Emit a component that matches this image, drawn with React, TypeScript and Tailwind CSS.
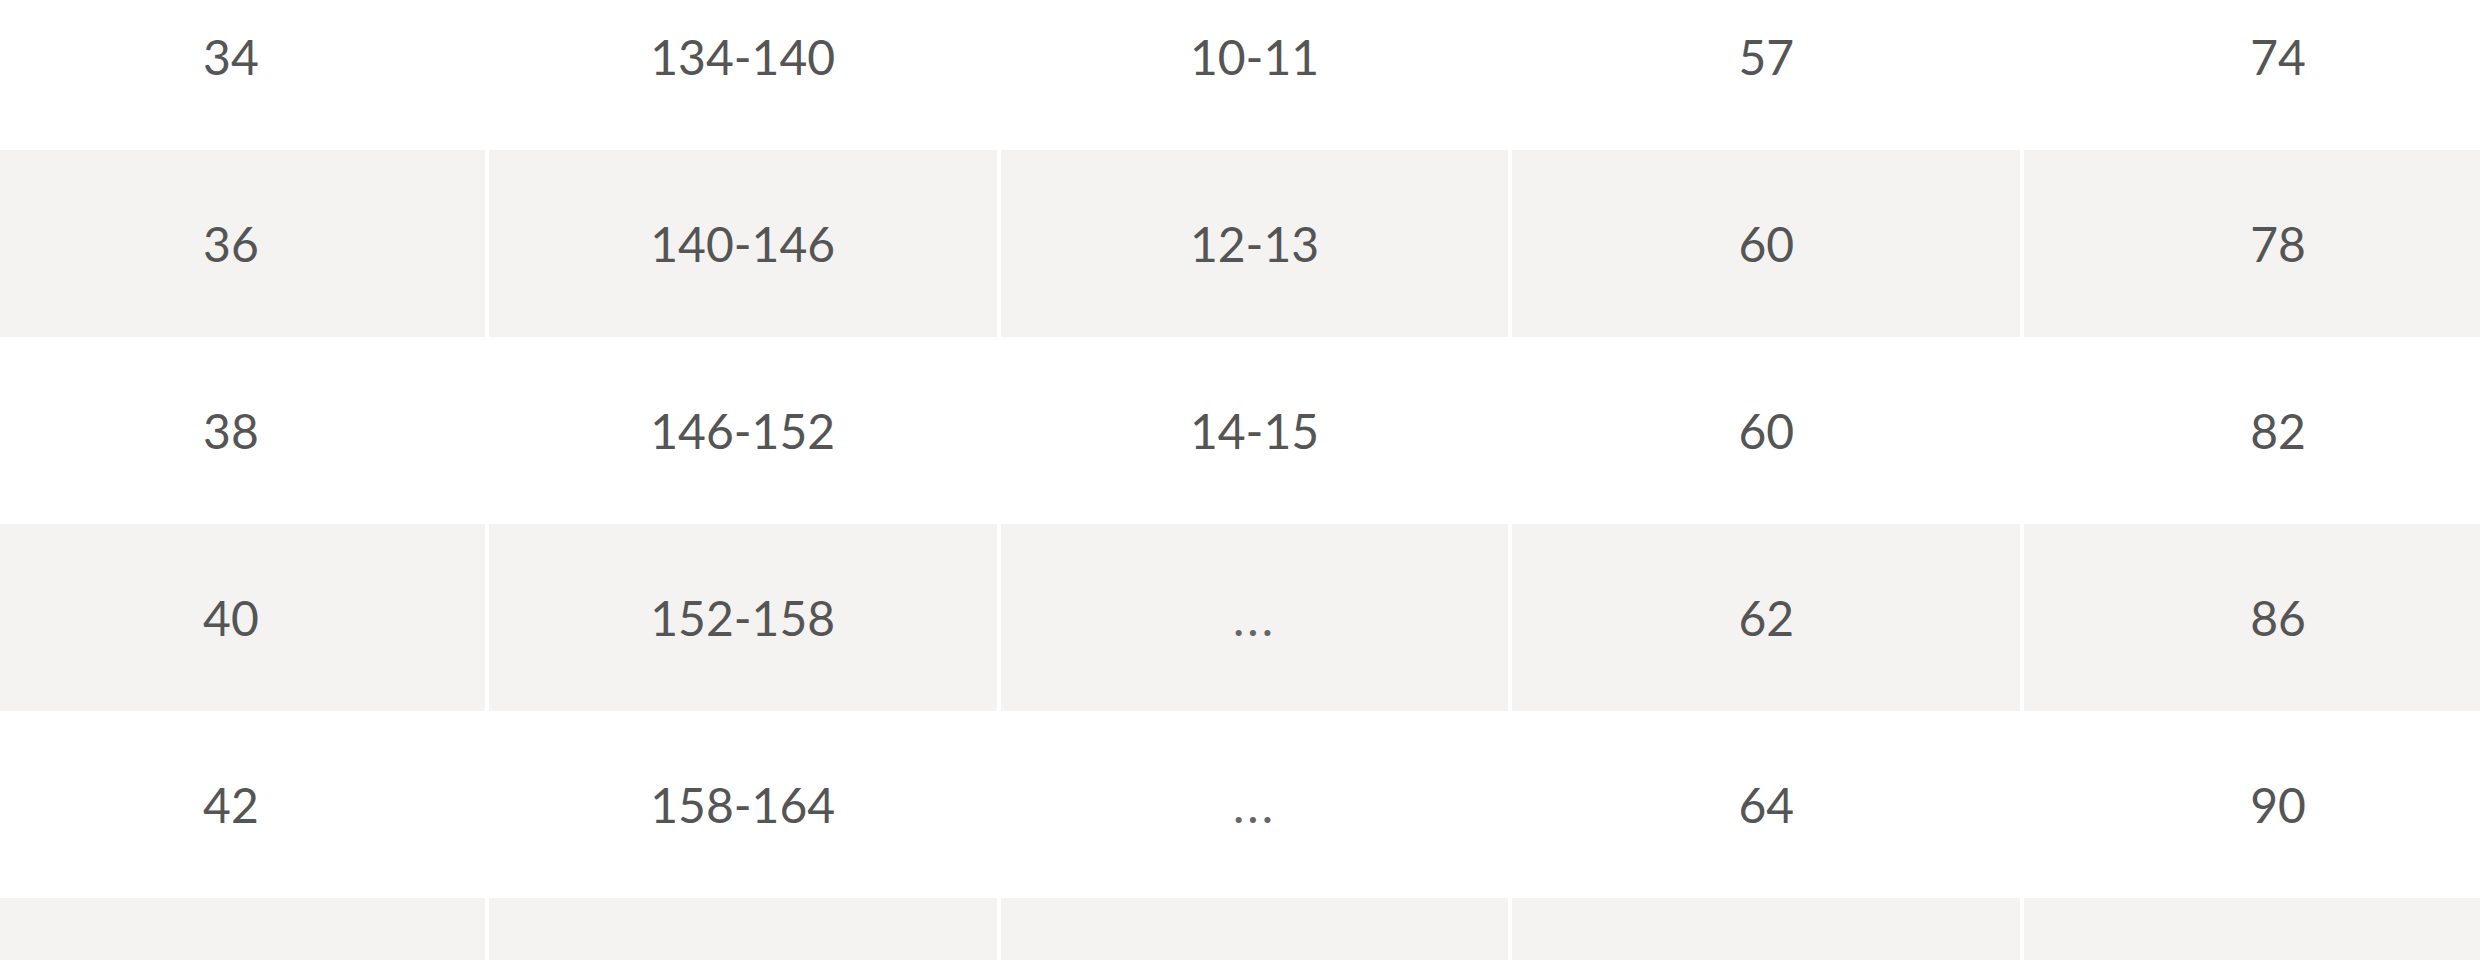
const rows = [
	["34", "134-140", "10-11", "57", "74"],
	["36", "140-146", "12-13", "60", "78"],
	["38", "146-152", "14-15", "60", "82"],
	["40", "152-158", "...", "62", "86"],
	["42", "158-164", "...", "64", "90"],
	["44", "164-170", "...", "66", "94"],
];

export default function App() {
	return (
		<div className="h-[960px] w-[2480px] overflow-hidden bg-white">
			<div className="-mt-[37px] -ml-[23px] w-[2555px]">
				{rows.map((row, i) => (
					<div
						key={i}
						className="grid grid-cols-5 gap-x-[4px] h-[187px]"
					>
						{row.map((cell, j) => (
							<div
								key={j}
								className={
									"flex items-center justify-center text-[48px] text-[#555] font-['Lato',sans-serif] " +
									(i % 2 === 1 ? "bg-[#f4f3f1]" : "bg-white")
								}
							>
								{i === 5 ? (
									""
								) : cell === "..." ? (
									<span className="tracking-[3px] text-[#666]">{cell}</span>
								) : (
									cell
								)}
							</div>
						))}
					</div>
				))}
			</div>
		</div>
	);
}
